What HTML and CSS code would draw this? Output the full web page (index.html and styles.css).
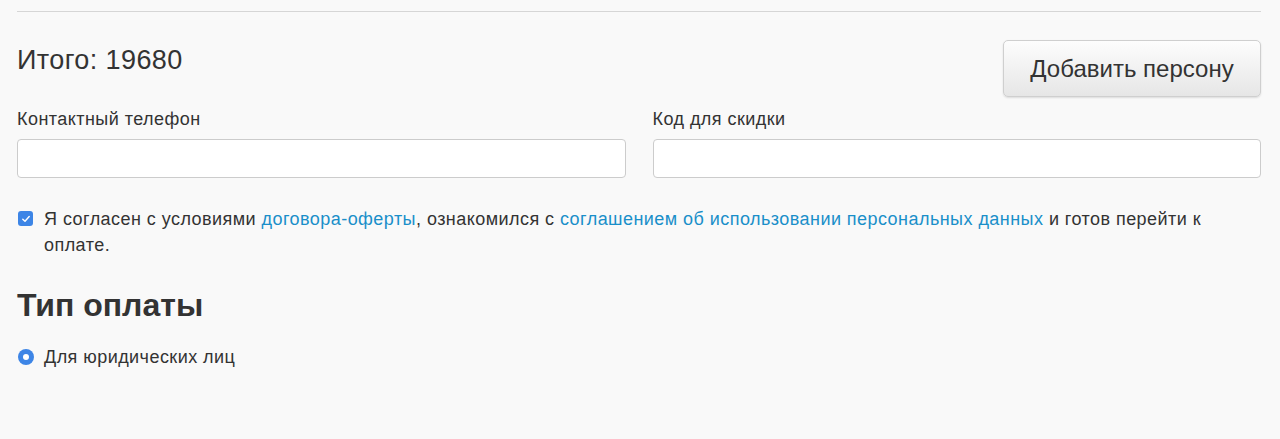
FILE: index.html
```html
<!DOCTYPE html>
<html lang="ru">
<head>
<meta charset="utf-8">
<link rel="stylesheet" href="styles.css">
</head>
<body>
<div class="page">
  <div class="divider"></div>
  <div class="total-row">
    <div class="total">Итого: 19680</div>
    <button class="btn" type="button">Добавить персону</button>
  </div>
  <div class="fields">
    <div class="field">
      <label class="label">Контактный телефон</label>
      <div class="input"></div>
    </div>
    <div class="field">
      <label class="label">Код для скидки</label>
      <div class="input"></div>
    </div>
  </div>
  <div class="agree">
    <span class="checkbox">
      <svg viewBox="0 0 14 14" width="10" height="10"><path d="M2.5 7.3 L5.6 10.2 L11.5 3.6" fill="none" stroke="#fff" stroke-width="2" stroke-linecap="round" stroke-linejoin="round"/></svg>
    </span>
    <p class="agree-text">Я согласен с условиями <a class="link">договора-оферты</a>, ознакомился с <a class="link">соглашением об использовании персональных данных</a> и готов перейти к оплате.</p>
  </div>
  <h2 class="heading">Тип оплаты</h2>
  <div class="radio-row">
    <span class="radio"></span>
    <span class="radio-label">Для юридических лиц</span>
  </div>
</div>
</body>
</html>
```

FILE: styles.css
```css
html, body {
  margin: 0;
  padding: 0;
  background: #f9f9f9;
}
body {
  font-family: "Liberation Sans", Arial, sans-serif;
  color: #333;
}
.page {
  padding: 11px 19px 0 17px;
}
.divider {
  height: 1px;
  background: #d6d6d6;
}
.total-row {
  display: flex;
  justify-content: space-between;
  align-items: flex-start;
  margin-top: 28px;
}
.total {
  font-size: 27px;
  line-height: 32px;
  letter-spacing: 0.4px;
  margin-top: 4px;
  color: #333;
}
.btn {
  box-sizing: border-box;
  width: 258px;
  height: 57px;
  font-family: inherit;
  font-size: 24px;
  color: #333;
  background: linear-gradient(#fdfdfd, #e6e6e6);
  border: 1px solid #cfcfcf;
  border-radius: 5px;
  box-shadow: 0 1px 2px rgba(0,0,0,0.12);
  padding: 0;
}
.fields {
  display: flex;
  gap: 27px;
  margin-top: 11px;
}
.field {
  flex: 1;
  display: flex;
  flex-direction: column;
}
.label {
  font-size: 18px;
  line-height: 22px;
  letter-spacing: 0.45px;
  color: #333;
}
.input {
  box-sizing: border-box;
  margin-top: 9px;
  height: 39px;
  background: #fff;
  border: 1px solid #ccc;
  border-radius: 4px;
}
.agree {
  display: flex;
  align-items: flex-start;
  margin-top: 28px;
}
.checkbox {
  flex: none;
  width: 15px;
  height: 15px;
  margin: 5px 11px 0 1px;
  border-radius: 3px;
  background: #3d85e6;
  display: flex;
  align-items: center;
  justify-content: center;
}
.agree-text {
  margin: 0;
  font-size: 18px;
  line-height: 26px;
  letter-spacing: 0.45px;
  max-width: 1190px;
}
.link {
  color: #1a8fc9;
  text-decoration: none;
}
.heading {
  margin: 29px 0 0;
  font-size: 32px;
  line-height: 36px;
  font-weight: bold;
  color: #333;
}
.radio-row {
  display: flex;
  align-items: center;
  margin-top: 23px;
}
.radio {
  width: 16px;
  height: 16px;
  border-radius: 50%;
  background: #3d85e6;
  margin: 0 10px 0 1px;
  position: relative;
  flex: none;
}
.radio::after {
  content: "";
  position: absolute;
  left: 5px;
  top: 5px;
  width: 6px;
  height: 6px;
  border-radius: 50%;
  background: #fff;
}
.radio-label {
  font-size: 18px;
  line-height: 22px;
  letter-spacing: 0.45px;
}
```
